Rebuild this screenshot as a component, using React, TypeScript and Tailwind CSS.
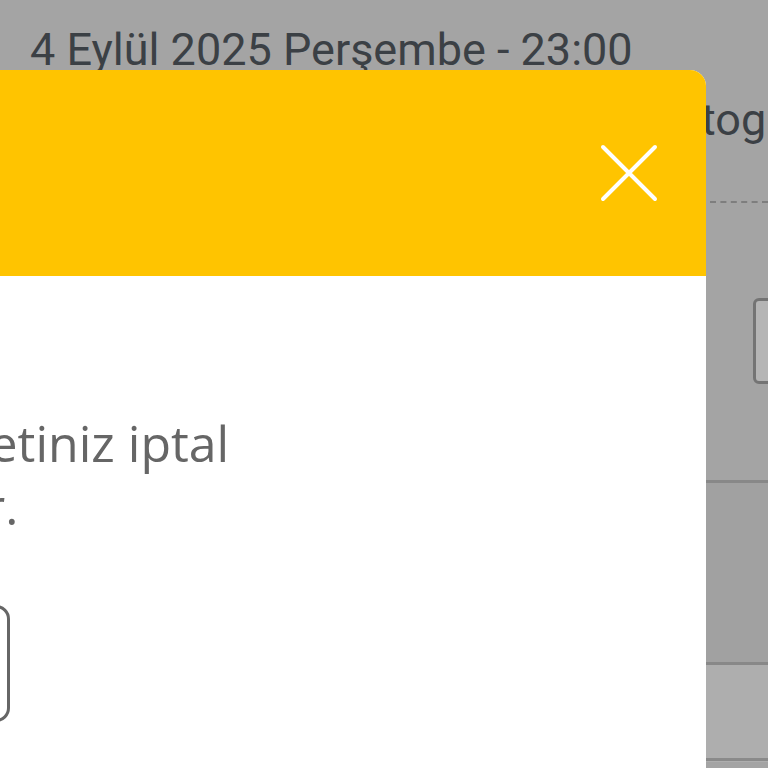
export default function App() {
  return (
    <div className="relative w-[768px] h-[768px] overflow-hidden bg-[#a4a4a4] font-['Roboto',sans-serif]">
      {/* sayfa (modal arkasi) */}
      <div className="pt-[27px] pl-[30px] text-[45px] leading-none text-[#3b4045] whitespace-nowrap">
        4 Eylül 2025 Perşembe - 23:00
      </div>
      <div className="ml-[651px] mt-[25px]">
        <div className="text-[45px] leading-none text-[#3b4045] whitespace-nowrap">Fotogaleri</div>
        <div className="h-[61px] ml-[59px] border-b-2 border-dashed border-[#7e7e7e]" />
        <div className="ml-[102px] mt-[95px] h-[86px] w-[120px] rounded-[6px] border-[3px] border-[#747474] bg-[#b5b5b5]" />
        <div className="mt-[96px] h-[182px] border-t-[3px] border-[#888] bg-[#a1a1a1]" />
        <div className="h-[100px] border-t-[3px] border-[#888] bg-[#aeaeae]">
          <div className="mt-[93px] border-t-[3px] border-[#8a8a8a]" />
        </div>
      </div>

      {/* modal */}
      <div className="absolute left-[-276px] right-[62px] top-[70px] bottom-[-40px] rounded-[16px] overflow-hidden bg-white">
        <div className="h-[206px] bg-[#ffc400] flex items-center justify-end pr-[47px]">
          <button className="text-white">
            <svg className="w-[60px] h-[60px]" viewBox="0 0 60 60" fill="none" stroke="currentColor" strokeWidth={4} strokeLinecap="round">
              <path d="M4 4L56 56M56 4L4 56" />
            </svg>
          </button>
        </div>
        <div className="px-[40px] pt-[136px]">
          <p className="font-['Open_Sans',sans-serif] text-[50px] leading-[63px] text-[#666] whitespace-nowrap">
            Satılan biletiniz iptal
            <br />
            edilecektir.
          </p>
          <button className="mt-[67px] w-[246px] h-[117px] rounded-[14px] border-[3px] border-[#666] bg-white" />
        </div>
      </div>
    </div>
  );
}
